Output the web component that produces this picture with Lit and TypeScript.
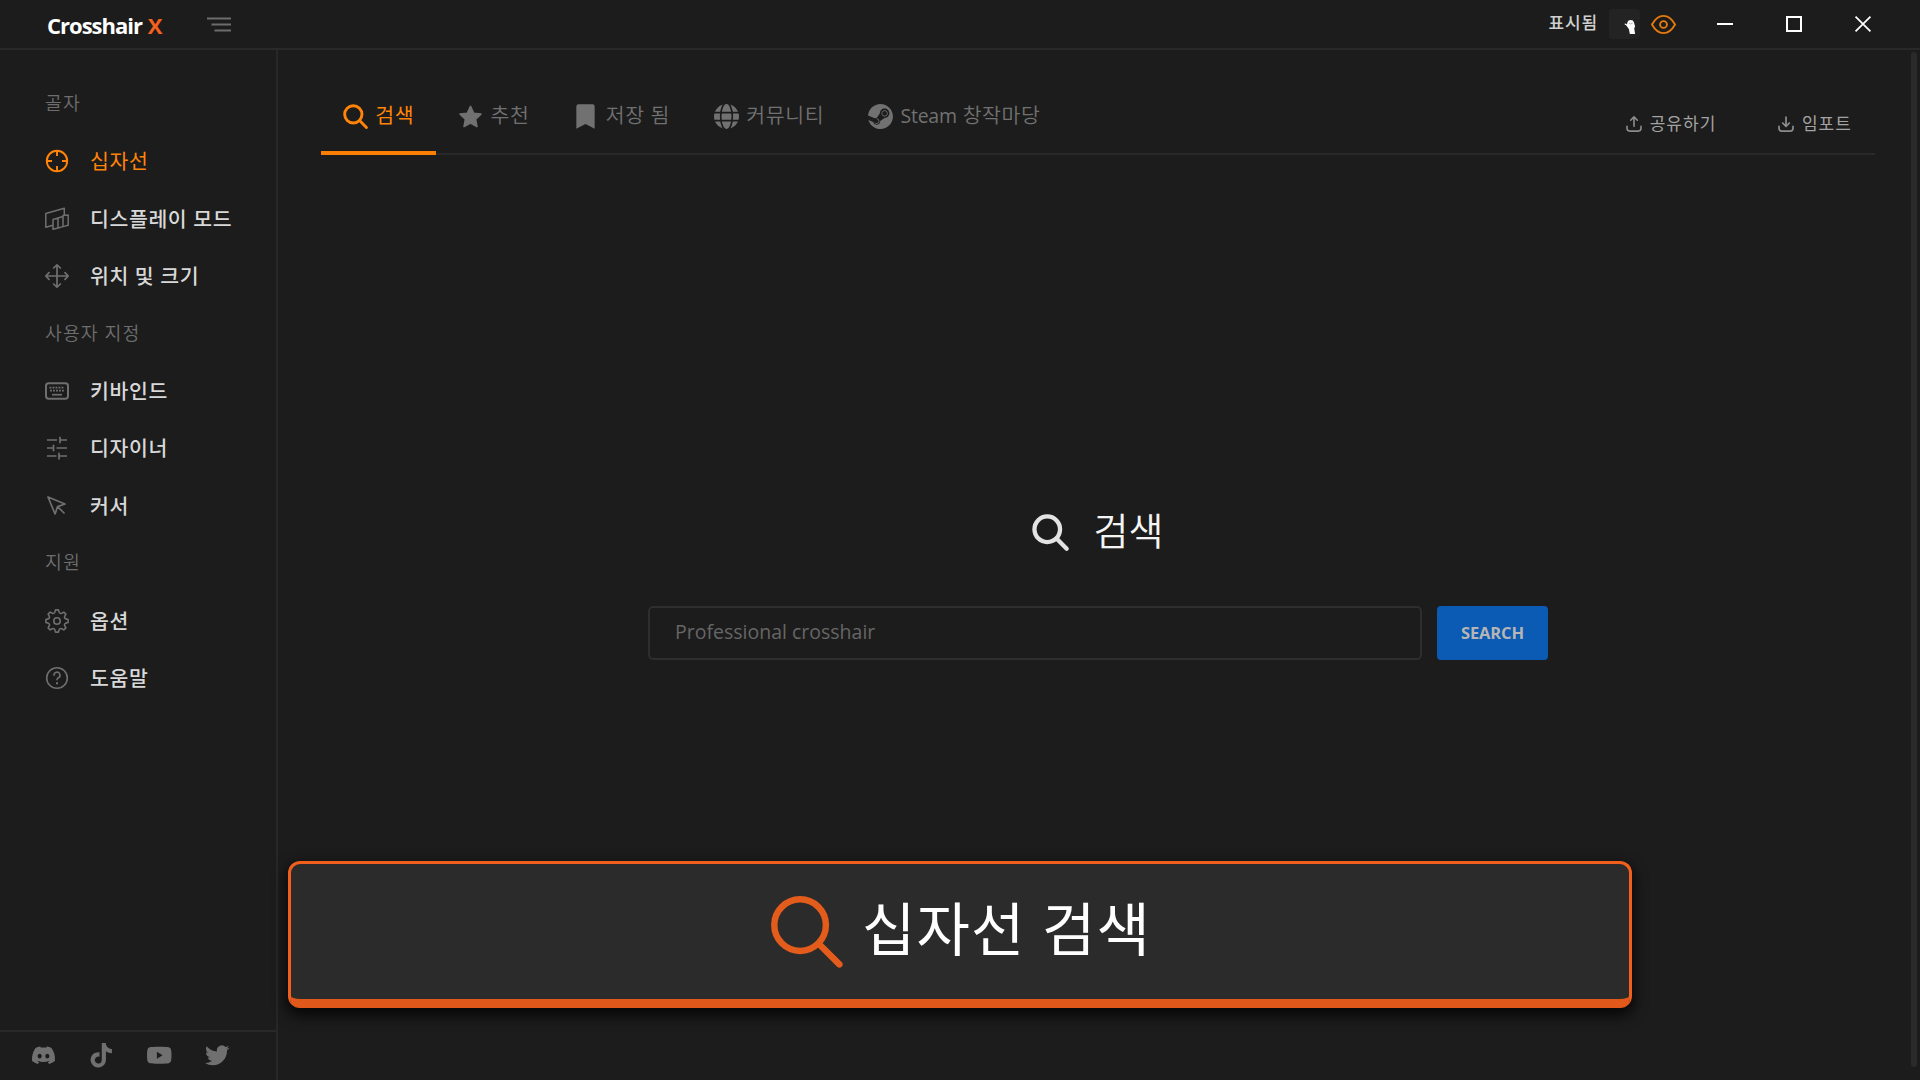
import { LitElement, html, css, svg, nothing } from "lit";
import { customElement, property, state } from "lit/decorators.js";
import { classMap } from "lit/directives/class-map.js";

function gearPath(): string {
  const pts: string[] = [];
  const teeth = 8;
  for (let i = 0; i < teeth; i++) {
    const base = (i * 2 * Math.PI) / teeth - Math.PI / 2;
    const at = (a: number, r: number) =>
      `${(12 + r * Math.cos(base + a)).toFixed(2)} ${(12 + r * Math.sin(base + a)).toFixed(2)}`;
    pts.push(`${i === 0 ? "M" : "L"}${at(-0.13, 11.2)}`);
    pts.push(`L${at(0.13, 11.2)}`);
    pts.push(`L${at(0.24, 9)}`);
    pts.push(`Q${at(0.3927, 7.6)} ${at(0.5454, 9)}`);
  }
  return pts.join("") + "Z";
}

const icons: Record<string, unknown> = {
  menu: svg`<path fill="none" stroke="currentColor" stroke-width="1.8" d="M0 1.5H24M4.500 7.500H24M7.500 13.500H24"/>`,
  crosshair: svg`<g fill="none" stroke="currentColor" stroke-width="1.9"><circle cx="12" cy="12" r="10.200"/><path d="M12 2v5M12 17v5M2 12h5M17 12h5"/></g>`,
  display: svg`<g fill="none" stroke="currentColor" stroke-width="1.5" stroke-linejoin="round"><path d="M8 18.300L.8 20.200V6.500L19.300 1.200V8.500"/><path d="M8 12.500L13 11V21L8 22.300ZM13 11V21L18 19.600V9.500ZM18 8.500L23.200 8V18.200L18 19.600Z"/></g>`,
  move: svg`<path fill="none" stroke="currentColor" stroke-width="1.7" stroke-linecap="round" stroke-linejoin="round" d="M12 .9v22.200M.9 12h22.200M8.600 4L12 .8 15.400 4M8.600 20L12 23.200 15.400 20M4 8.600L.8 12 4 15.400M20 8.600L23.200 12 20 15.400"/>`,
  keyboard: svg`<g fill="none" stroke="currentColor"><rect x="1" y="4.300" width="22" height="15.400" rx="2.600" stroke-width="2"/><path stroke-width="1.700" stroke-dasharray="1.900 1.100" d="M4.500 8.600H19.500M5 11.700H19.500"/><path stroke-width="1.700" d="M7 15.700H17"/></g>`,
  sliders: svg`<path fill="none" stroke="currentColor" stroke-width="1.700" d="M2 4H12M15 .8V7.200M15 4H22M2 12H8.500M8.500 8.800V15.200M11.500 12H22M2 20H11.500M14 16.800V23.500M14 20H22"/>`,
  pointer: svg`<path fill="none" stroke="currentColor" stroke-width="1.700" stroke-linejoin="round" stroke-linecap="round" d="M3 3l7.070 16.970 2.510-7.390 7.390-2.510L3 3zM13 13l6 6"/>`,
  gear: svg`<g fill="none" stroke="currentColor" stroke-width="1.600" stroke-linejoin="round"><path d=${gearPath()}/><circle cx="12" cy="12" r="3.200"/></g>`,
  help: svg`<g fill="none" stroke="currentColor" stroke-width="1.600"><circle cx="12" cy="12" r="10.300"/><path stroke-linecap="round" d="M9 9.300a3 3 0 1 1 4.400 2.500c-.9.500-1.400 1-1.400 2"/><path stroke-width="1.900" d="M11 17.300h2"/></g>`,
  search: svg`<g fill="none" stroke="currentColor" stroke-width="2.800"><circle cx="9.900" cy="9.900" r="8.300"/><path stroke-linecap="round" d="M15.900 15.900L22.500 22.500"/></g>`,
  searchThin: svg`<g fill="none" stroke="currentColor" stroke-width="2.150"><circle cx="9.700" cy="9.700" r="8.600"/><path stroke-linecap="round" d="M16 16L22.800 22.800"/></g>`,
  star: svg`<path fill="currentColor" stroke="currentColor" stroke-width="1.500" stroke-linejoin="round" d="M12 2.300L15 8.800 22 9.700 16.900 14.600 18.200 21.700 12 18.300 5.800 21.700 7.100 14.600 2 9.700 9 8.800Z"/>`,
  bookmark: svg`<path fill="currentColor" d="M5.200.3H18.800Q20.800.3 20.800 2.300V23.700L12 19.300 3.200 23.700V2.300Q3.200.3 5.200.3Z"/>`,
  globe: svg`<circle cx="12" cy="12" r="12" fill="currentColor"/><g fill="none" stroke="#1c1c1c" stroke-width="1.600"><ellipse cx="12" cy="12" rx="5.600" ry="13"/><path d="M0 8.200H24M0 16H24"/></g>`,
  steam: svg`<path fill="currentColor" d="M11.979 0C5.678 0 .511 4.860.022 11.037l6.432 2.658c.545-.371 1.203-.59 1.912-.59.063 0 .125.004.188.006l2.861-4.142V8.910c0-2.495 2.028-4.524 4.524-4.524 2.494 0 4.524 2.031 4.524 4.527s-2.030 4.525-4.524 4.525h-.105l-4.076 2.911c0 .052.004.105.004.159 0 1.875-1.515 3.396-3.390 3.396-1.635 0-3.016-1.173-3.331-2.727L.436 15.270C1.862 20.307 6.486 24 11.979 24c6.627 0 11.999-5.373 11.999-12S18.605 0 11.979 0zM7.540 18.210l-1.473-.61c.262.543.714.999 1.314 1.250 1.297.539 2.793-.076 3.332-1.375.263-.63.264-1.319.005-1.949s-.75-1.121-1.377-1.383c-.624-.26-1.290-.249-1.878-.03l1.523.63c.956.4 1.409 1.500 1.009 2.455-.397.957-1.497 1.410-2.454 1.012H7.540zm11.415-9.303c0-1.662-1.353-3.015-3.015-3.015-1.665 0-3.015 1.353-3.015 3.015 0 1.665 1.350 3.015 3.015 3.015 1.663 0 3.015-1.350 3.015-3.015zm-5.273-.005c0-1.252 1.013-2.266 2.265-2.266 1.249 0 2.266 1.014 2.266 2.266 0 1.251-1.017 2.265-2.266 2.265-1.253 0-2.265-1.014-2.265-2.265z"/>`,
  share: svg`<path fill="none" stroke="currentColor" stroke-width="2.400" stroke-linecap="round" stroke-linejoin="round" d="M12 15.500V1.500M7 6.300L12 1.300 17 6.300M1.500 15.500V18.500Q1.500 22.700 5.700 22.700H18.300Q22.500 22.700 22.500 18.500V15.500"/>`,
  import: svg`<path fill="none" stroke="currentColor" stroke-width="2.600" stroke-linecap="round" stroke-linejoin="round" d="M12 1.500V15M7 10.500L12 15.500 17 10.500M1.500 15.500V18.500Q1.500 22.700 5.700 22.700H18.300Q22.500 22.700 22.500 18.500V15.500"/>`,
  eye: svg`<g fill="none" stroke="currentColor" stroke-width="1.800" stroke-linejoin="round"><path d="M.9 12C4 6.500 7.500 3.700 12 3.700S20 6.500 23.100 12C20 17.500 16.500 20.300 12 20.300S4 17.500 .9 12Z"/><circle cx="12" cy="12" r="3.300"/></g>`,
  minimize: svg`<path stroke="currentColor" stroke-width="3" d="M0 12H24"/>`,
  maximize: svg`<rect x="1.500" y="1.500" width="21" height="21" fill="none" stroke="currentColor" stroke-width="3"/>`,
  close: svg`<path stroke="currentColor" stroke-width="2.600" d="M.8.8L23.200 23.200M23.200.8L.8 23.200"/>`,
  hand: svg`<path fill="#fff" d="M4 9.500Q0 7.500 1 6.500T5 7.500L6 3.500Q7 0 11.500 0T17 4L18.500 9 19 11.500 17.500 14 19 24H10L8.500 16Z"/><path fill="none" stroke="#9a9a9a" stroke-width="1.200" d="M8.500 5.500Q11 8.500 15 5"/>`,
  discord: svg`<path fill="currentColor" d="M20.317 4.370a19.791 19.791 0 00-4.885-1.515.074.074 0 00-.079.037c-.211.375-.445.865-.608 1.250-1.845-.276-3.680-.276-5.487 0-.164-.393-.406-.874-.618-1.250a.077.077 0 00-.079-.037 19.736 19.736 0 00-4.885 1.515.07.07 0 00-.032.028C.533 9.046-.319 13.580.099 18.058a.082.082 0 00.031.056c2.053 1.508 4.041 2.423 5.993 3.029a.078.078 0 00.084-.028c.462-.63.873-1.295 1.226-1.994a.076.076 0 00-.042-.106c-.653-.248-1.274-.55-1.872-.892a.077.077 0 01-.008-.128c.126-.094.252-.192.372-.291a.074.074 0 01.078-.011c3.928 1.793 8.180 1.793 12.061 0a.074.074 0 01.079.010c.12.099.246.198.373.292a.077.077 0 01-.007.128 12.299 12.299 0 01-1.873.891.077.077 0 00-.041.107c.360.698.772 1.363 1.225 1.993a.076.076 0 00.084.029c1.961-.607 3.950-1.522 6.002-3.029a.077.077 0 00.031-.055c.5-5.177-.838-9.674-3.549-13.660a.061.061 0 00-.031-.029zM8.020 15.331c-1.183 0-2.157-1.086-2.157-2.419 0-1.333.956-2.419 2.157-2.419 1.211 0 2.176 1.095 2.157 2.419 0 1.333-.956 2.419-2.157 2.419zm7.975 0c-1.183 0-2.157-1.086-2.157-2.419 0-1.333.955-2.419 2.157-2.419 1.211 0 2.176 1.095 2.157 2.419 0 1.333-.946 2.419-2.157 2.419z"/>`,
  tiktok: svg`<path fill="currentColor" d="M12.525.02c1.310-.02 2.610-.01 3.910-.02.08 1.530.63 3.090 1.750 4.170 1.120 1.110 2.700 1.620 4.240 1.790v4.030c-1.440-.05-2.890-.35-4.200-.97-.57-.26-1.100-.59-1.620-.93-.01 2.920.01 5.840-.02 8.750-.08 1.400-.54 2.790-1.350 3.940-1.310 1.920-3.580 3.170-5.910 3.210-1.430.08-2.860-.31-4.080-1.030-2.020-1.190-3.440-3.370-3.650-5.710-.02-.5-.03-1-.01-1.490.18-1.900 1.120-3.720 2.580-4.960 1.660-1.440 3.980-2.130 6.150-1.720.02 1.480-.04 2.960-.04 4.440-.99-.32-2.150-.23-3.020.37-.63.41-1.110 1.040-1.360 1.750-.21.51-.15 1.070-.14 1.610.24 1.640 1.820 3.020 3.500 2.870 1.120-.01 2.190-.66 2.770-1.610.19-.33.4-.67.41-1.060.1-1.790.06-3.570.07-5.360.01-4.030-.01-8.050.02-12.070z"/>`,
  youtube: svg`<path fill="currentColor" fill-rule="evenodd" d="M12 3.700C17 3.700 20 3.900 21.300 4.200Q23.200 4.700 23.600 6.500 24 8.500 24 12T23.600 17.500Q23.200 19.300 21.300 19.800C20 20.100 17 20.300 12 20.300S4 20.100 2.700 19.800Q.8 19.300.4 17.500 0 15.500 0 12T.4 6.500Q.8 4.700 2.700 4.200C4 3.900 7 3.700 12 3.700ZM9.700 8.500V15.500L15.300 12Z"/>`,
  twitter: svg`<path fill="currentColor" d="M23.953 4.570a10 10 0 01-2.825.775 4.958 4.958 0 002.163-2.723c-.951.555-2.005.959-3.127 1.184a4.920 4.920 0 00-8.384 4.482C7.690 8.095 4.067 6.130 1.640 3.162a4.822 4.822 0 00-.666 2.475c0 1.710.87 3.213 2.188 4.096a4.904 4.904 0 01-2.228-.616v.06a4.923 4.923 0 003.946 4.827 4.996 4.996 0 01-2.212.085 4.936 4.936 0 004.604 3.417 9.867 9.867 0 01-6.102 2.105c-.39 0-.779-.023-1.170-.067a13.995 13.995 0 007.557 2.209c9.053 0 13.998-7.496 13.998-13.985 0-.21 0-.42-.015-.63A9.935 9.935 0 0024 4.590z"/>`,
};

const viewBoxes: Record<string, string> = { menu: "0 0 24 15" };

@customElement("ui-icon")
class UiIcon extends LitElement {
  @property() name = "";
  static styles = css`
    :host { display: block; flex: none; width: 24px; height: 24px; }
    .glyph { display: block; width: 100%; height: 100%; overflow: visible; }
  `;
  render() {
    return html`<svg class="glyph" viewBox=${viewBoxes[this.name] ?? "0 0 24 24"} aria-hidden="true">${icons[this.name] ?? nothing}</svg>`;
  }
}

interface Entry { icon: string; label: string; }
interface Section { title: string; items: Entry[]; }

const sections: Section[] = [
  { title: "골자", items: [
    { icon: "crosshair", label: "십자선" },
    { icon: "display", label: "디스플레이 모드" },
    { icon: "move", label: "위치 및 크기" },
  ] },
  { title: "사용자 지정", items: [
    { icon: "keyboard", label: "키바인드" },
    { icon: "sliders", label: "디자이너" },
    { icon: "pointer", label: "커서" },
  ] },
  { title: "지원", items: [
    { icon: "gear", label: "옵션" },
    { icon: "help", label: "도움말" },
  ] },
];

@customElement("title-bar")
class TitleBar extends LitElement {
  static styles = css`
    :host { display: flex; align-items: center; box-sizing: border-box; height: 50px; padding: 0 49px 0 47px; border-bottom: 2px solid #292929; flex: none; }
    .brand { width: 160px; font: 700 22px/28px "Open Sans", sans-serif; letter-spacing: -1px; color: #fff; white-space: nowrap; padding-top: 1px; }
    .mark { color: #f4601e; padding-left: 1px; }
    .menu { width: 24px; height: 15px; color: #6c6c6c; padding-top: 1px; }
    .status { margin-left: auto; font: 500 17px/24px "Noto Sans CJK KR", sans-serif; letter-spacing: 0.900px; color: #cfcfcf; padding-bottom: 5px; }
    .switch { box-sizing: border-box; width: 31px; height: 30px; margin-left: 11px; padding: 9px 0 0 15px; border-radius: 4px; background: #232323; }
    .hand { width: 14px; height: 18px; }
    .eye { width: 25px; height: 25px; margin-left: 11px; color: #e67a0c; }
    .controls { display: flex; gap: 53px; margin-left: 41px; color: #fff; }
    .control { width: 16px; height: 16px; }
  `;
  render() {
    return html`
      <div class="brand">Crosshair <span class="mark">X</span></div>
      <ui-icon class="menu" name="menu"></ui-icon>
      <div class="status">표시됨</div>
      <div class="switch"><ui-icon class="hand" name="hand"></ui-icon></div>
      <ui-icon class="eye" name="eye"></ui-icon>
      <div class="controls">
        ${["minimize", "maximize", "close"].map((n) => html`<ui-icon class="control" name=${n}></ui-icon>`)}
      </div>`;
  }
}

@customElement("side-nav")
class SideNav extends LitElement {
  @state() private active = "십자선";
  static styles = css`
    :host { display: flex; flex-direction: column; justify-content: space-between; box-sizing: border-box; width: 278px; border-right: 2px solid #272727; flex: none; font-family: "Open Sans", "Noto Sans CJK KR", sans-serif; }
    .list { padding-top: 25.300px; }
    .title { height: 57.400px; padding-left: 45px; font-size: 18.300px; line-height: 56px; font-weight: 350; letter-spacing: 1.100px; color: #6e6e6e; }
    .item { display: flex; align-items: center; height: 57.400px; padding-left: 45px; color: #6f6f6f; }
    .label { padding-left: 21px; font-size: 20.500px; line-height: 30px; font-weight: 500; letter-spacing: 0.600px; color: #d8d8d8; cursor: pointer; }
    .active, .active .label { color: #ff8408; }
    .active .label { font-weight: 400; }
    .social { display: flex; align-items: center; gap: 33.500px; height: 50px; box-sizing: border-box; padding: 0 0 2px 32px; border-top: 2px solid #292929; color: #707070; }
    .net { width: 24.500px; height: 24.500px; }
    .discord { width: 23px; }
  `;
  render() {
    return html`
      <nav class="list">
        ${sections.map((s) => html`
          <div class="title">${s.title}</div>
          ${s.items.map((i) => html`
            <div class=${classMap({ item: true, active: i.label === this.active })} @click=${() => (this.active = i.label)}>
              <ui-icon name=${i.icon}></ui-icon><span class="label">${i.label}</span>
            </div>`)}`)}
      </nav>
      <div class="social">
        ${["discord", "tiktok", "youtube", "twitter"].map((n) => html`<ui-icon class="net ${n}" name=${n}></ui-icon>`)}
      </div>`;
  }
}

@customElement("tab-bar")
class TabBar extends LitElement {
  static styles = css`
    :host { display: flex; justify-content: space-between; box-sizing: border-box; height: 105px; border-bottom: 2px solid #292929; font-family: "Open Sans", "Noto Sans CJK KR", sans-serif; }
    .tabs { display: flex; height: 105px; }
    .tab { display: flex; align-items: center; box-sizing: border-box; height: 105px; gap: 7.300px; padding: 31px 22px 0 22px; border-bottom: 4px solid transparent; color: #717171; }
    .tab-icon { width: 25px; height: 25px; }
    .label { font-size: 20.500px; font-weight: 350; line-height: 30px; letter-spacing: 0.600px; padding-bottom: 2px; white-space: nowrap; }
    .current { border-bottom-color: #fb7f05; color: #ff8408; }
    .current .label { font-weight: 400; }
    .latin { font-size: 19.500px; font-weight: 400; letter-spacing: -0.250px; }
    .actions { display: flex; gap: 61.500px; padding: 61px 23px 0 0; color: #a3a3a3; }
    .action { display: flex; align-items: center; gap: 8px; height: 26px; font-size: 17px; line-height: 26px; letter-spacing: 1.050px; }
    .action-icon { width: 16px; height: 16px; color: #8c8c8c; }
  `;
  render() {
    const tabs = [
      { icon: "search", label: html`검색` },
      { icon: "star", label: html`추천` },
      { icon: "bookmark", label: html`저장 됨` },
      { icon: "globe", label: html`커뮤니티` },
      { icon: "steam", label: html`<span class="latin">Steam</span> 창작마당` },
    ];
    return html`
      <div class="tabs">
        ${tabs.map((t, i) => html`
          <div class=${classMap({ tab: true, current: i === 0 })}>
            <ui-icon class="tab-icon" name=${t.icon}></ui-icon><span class="label">${t.label}</span>
          </div>`)}
      </div>
      <div class="actions">
        <div class="action"><ui-icon class="action-icon" name="share"></ui-icon>공유하기</div>
        <div class="action"><ui-icon class="action-icon" name="import"></ui-icon>임포트</div>
      </div>`;
  }
}

@customElement("search-panel")
class SearchPanel extends LitElement {
  static styles = css`
    :host { display: flex; flex-direction: column; align-items: center; padding-top: 347px; font-family: "Open Sans", "Noto Sans CJK KR", sans-serif; }
    .heading { display: flex; align-items: center; gap: 25px; height: 60px; color: #e3e3e3; padding-right: 1px; }
    .heading-icon { width: 37px; height: 37px; }
    .heading-text { font-size: 38px; line-height: 56px; color: #f4f4f4; padding-bottom: 4px; font-weight: 350; }
    .form { display: flex; gap: 15px; padding-top: 44px; }
    .field { box-sizing: border-box; width: 774px; height: 54px; border: 2px solid #2e2e2e; border-radius: 5px; background: transparent; padding: 0 25px 3px; font: 400 19.500px "Open Sans", sans-serif; letter-spacing: 0; color: #ccc; outline: none; }
    .field::placeholder { color: #666; opacity: 1; }
    .submit { width: 111px; height: 54px; border: 0; border-radius: 4px; padding: 0 0 2px; background: #0b5ab3; color: #b5b5b5; font: 700 16.500px "Open Sans", sans-serif; letter-spacing: -0.150px; }
  `;
  render() {
    return html`
      <div class="heading"><ui-icon class="heading-icon" name="search"></ui-icon><span class="heading-text">검색</span></div>
      <div class="form">
        <input class="field" placeholder="Professional crosshair" />
        <button class="submit">SEARCH</button>
      </div>`;
  }
}

@customElement("app-root")
class AppRoot extends LitElement {
  static styles = css`
    :host { display: flex; flex-direction: column; position: relative; width: 1920px; height: 1080px; overflow: hidden; background: #1c1c1c; font-family: "Open Sans", "Noto Sans CJK KR", sans-serif; }
    .body { display: flex; flex: 1; min-height: 0; }
    .main { flex: 1; padding: 0 36px 0 43px; }
    .rail { width: 6px; margin: 2px 3px 13px 0; border-radius: 3px; background: #2a2a2a; }
    .banner { position: absolute; left: 288px; top: 861px; box-sizing: border-box; width: 1344px; height: 147px; display: flex; align-items: center; justify-content: center; gap: 19px; padding-left: 2px; border: 3px solid #f0601c; border-bottom: 9px solid #e0591a; border-radius: 12px; background: #2b2b2b; box-shadow: 0 6px 14px 2px rgba(0, 0, 0, 0.75); }
    .banner-icon { width: 72px; height: 72px; color: #e45c1b; }
    .banner-text { font-size: 58px; line-height: 80px; letter-spacing: 1.200px; color: #fff; padding-bottom: 6px; white-space: nowrap; }
  `;
  render() {
    return html`
      <title-bar></title-bar>
      <div class="body">
        <side-nav></side-nav>
        <main class="main">
          <tab-bar></tab-bar>
          <search-panel></search-panel>
        </main>
        <div class="rail"></div>
      </div>
      <div class="banner">
        <ui-icon class="banner-icon" name="searchThin"></ui-icon>
        <span class="banner-text">십자선 검색</span>
      </div>`;
  }
}
